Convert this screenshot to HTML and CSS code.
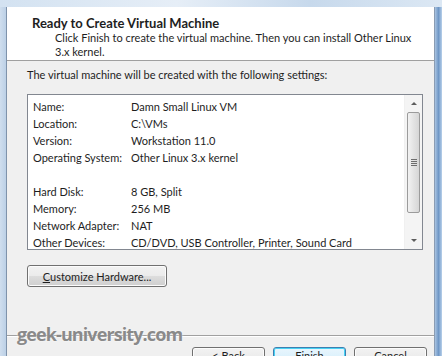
FILE: index.html
```html
<!DOCTYPE html>
<html lang="en">
<head>
  <meta charset="UTF-8" />
  <title>New Virtual Machine Wizard</title>
  <link rel="stylesheet" href="styles.css">
</head>
<body>
  <div class="top-band"></div>
  <div class="frame">
    <div class="frame-left"></div>
    <div class="dialog">
      <div class="header">
        <div class="title">Ready to Create Virtual Machine</div>
        <div class="subtitle">Click Finish to create the virtual machine. Then you can install Other Linux 3.x kernel.</div>
      </div>

      <div class="content">
        <div class="intro">The virtual machine will be created with the following settings:</div>

        <div class="listbox">
          <div class="settings">
            <div class="row"><span class="label">Name:</span><span>Damn Small Linux VM</span></div>
            <div class="row"><span class="label">Location:</span><span>C:\VMs</span></div>
            <div class="row"><span class="label">Version:</span><span>Workstation 11.0</span></div>
            <div class="row"><span class="label">Operating System:</span><span>Other Linux 3.x kernel</span></div>
            <div class="spacer"></div>
            <div class="row"><span class="label">Hard Disk:</span><span>8 GB, Split</span></div>
            <div class="row"><span class="label">Memory:</span><span>256 MB</span></div>
            <div class="row"><span class="label">Network Adapter:</span><span>NAT</span></div>
            <div class="row"><span class="label">Other Devices:</span><span>CD/DVD, USB Controller, Printer, Sound Card</span></div>
          </div>
          <div class="scrollbar">
            <div class="arrow up"></div>
            <div class="thumb">
              <div class="grip"></div>
            </div>
            <div class="arrow down"></div>
          </div>
        </div>

        <div class="btn customize"><span class="key">C</span>ustomize Hardware...</div>
      </div>

      <div class="footer">
        <div class="btn">&lt; Back</div>
        <div class="btn default">Finish</div>
        <div class="btn">Cancel</div>
      </div>

      <div class="watermark">geek-university.com</div>
    </div>
    <div class="frame-right"></div>
  </div>
</body>
</html>
```

FILE: styles.css
```css
html, body {
  margin: 0;
  padding: 0;
}

body {
  width: 442px;
  height: 356px;
  overflow: hidden;
  font-family: Lato, "Noto Sans", sans-serif;
  font-size: 11px;
  color: #1e1e1e;
  background: #c9dbee;
  display: flex;
  flex-direction: column;
}

.top-band {
  height: 7px;
  flex-shrink: 0;
  background: linear-gradient(to right, #d3e2f1, #e6eef7 40%, #c7d9ec 70%, #dce8f4);
}

.frame {
  flex: 1;
  display: flex;
  min-height: 0;
}

.frame-left {
  width: 6px;
  background: linear-gradient(to right, #cfdeee, #bcd0e6);
  border-right: 1px solid #7f93ab;
}

.frame-right {
  width: 7px;
  border-left: 1px solid #8a9cb3;
  background: linear-gradient(to right, #a9c4e2, #6f97c6 50%, #b8d0ea);
}

.dialog {
  flex: 1;
  position: relative;
  display: flex;
  flex-direction: column;
  background: #f0f0f0;
  min-width: 0;
  overflow: hidden;
}

/* header */
.header {
  flex-shrink: 0;
  background: #fff;
  border-bottom: 1px solid #a0a0a0;
  height: 54px;
  box-sizing: border-box;
  padding: 9px 0 0 25px;
}

.title {
  font-weight: bold;
  font-size: 13px;
  line-height: 15px;
}

.subtitle {
  margin-left: 23px;
  width: 362px;
  line-height: 14px;
}

/* body */
.content {
  padding: 5px 0 0 20px;
}

.intro {
  line-height: 17px;
}

.listbox {
  margin-top: 11px;
  width: 396px;
  height: 156px;
  box-sizing: border-box;
  border: 1px solid #828790;
  background: #fff;
  display: flex;
}

.settings {
  flex: 1;
  padding: 3px 0 0 5px;
  white-space: nowrap;
}

.row {
  display: flex;
  align-items: center;
  height: 17px;
}

.label {
  width: 98px;
  flex-shrink: 0;
}

.spacer {
  height: 17px;
}

.scrollbar {
  width: 17px;
  display: flex;
  flex-direction: column;
  align-items: center;
  background: #f4f4f4;
  border-left: 1px solid #f0f0f0;
}

.arrow {
  height: 17px;
  width: 17px;
  display: flex;
  align-items: center;
  justify-content: center;
}

.arrow::before {
  content: "";
  border-left: 3px solid transparent;
  border-right: 3px solid transparent;
}

.arrow.up::before {
  border-bottom: 3px solid #5c5c5c;
}

.arrow.down {
  margin-top: auto;
}

.arrow.down::before {
  border-top: 3px solid #5c5c5c;
}

.thumb {
  width: 13px;
  height: 101px;
  box-sizing: border-box;
  border: 1px solid #9b9b9b;
  border-radius: 2px;
  background: linear-gradient(to right, #f2f2f2, #e3e3e3 50%, #d6d6d6);
  display: flex;
  align-items: center;
  justify-content: center;
}

.grip {
  width: 6px;
  height: 7px;
  background: repeating-linear-gradient(to bottom, #6d6d6d 0 1px, transparent 1px 2px);
}

/* buttons */
.btn {
  box-sizing: border-box;
  height: 22px;
  border: 1px solid #707070;
  border-radius: 3px;
  background: linear-gradient(to bottom, #f2f2f2, #ebebeb 50%, #dddddd 50%, #cfcfcf);
  box-shadow: inset 0 0 0 1px #fcfcfc;
  display: flex;
  align-items: center;
  justify-content: center;
  color: #1e1e1e;
}

.customize {
  margin-top: 15px;
  width: 140px;
  height: 22px;
}

.key {
  text-decoration: underline;
}

.footer {
  margin-top: auto;
  flex-shrink: 0;
  height: 21px;
  box-sizing: border-box;
  overflow: hidden;
  border-top: 1px solid #a0a0a0;
  box-shadow: inset 0 1px 0 #fff;
  display: flex;
  align-items: flex-start;
  justify-content: flex-end;
  gap: 8px;
  padding: 11px 7px 0 0;
}

.footer .btn {
  width: 73px;
  height: 23px;
  flex-shrink: 0;
  align-items: flex-start;
  padding-top: 1px;
  line-height: 14px;
}

.footer .default {
  border-color: #3c7fb1;
  box-shadow: inset 0 0 0 1px #48d2f4;
  background: linear-gradient(to bottom, #eaf6fd, #d9f0fc 50%, #bee6fd 50%, #a7d9f5);
}

/* watermark laid over the footer */
.watermark {
  position: absolute;
  left: 10px;
  bottom: 11px;
  font-family: "Open Sans", sans-serif;
  font-weight: bold;
  font-size: 18px;
  line-height: 22px;
  color: #8a8a8a;
  letter-spacing: -0.9px;
  text-shadow: 0 0 2px #fff;
}
```
